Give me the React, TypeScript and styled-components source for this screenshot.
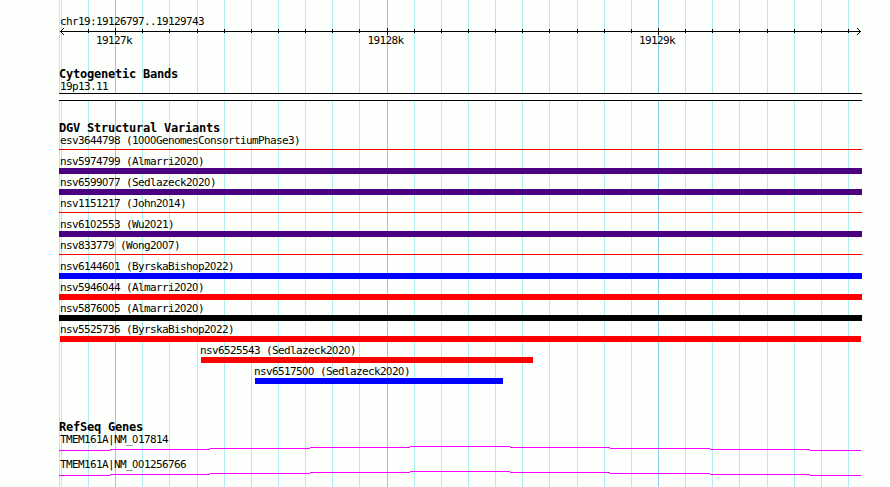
import React from "react";
import styled, { createGlobalStyle } from "styled-components";

const GlobalStyle = createGlobalStyle`
  body {
    margin: 0;
    background-color: #fdfffc;
  }
`;

const Browser = styled.main`
  position: relative;
  box-sizing: border-box;
  width: 890px;
  height: 487px;
  padding: 15px 28px 0 59px;
  overflow: hidden;
  color: black;
  font-family: "DejaVu Sans Mono", "Liberation Mono", monospace;
  font-size: 11px;
  line-height: 13px;
  letter-spacing: -0.62px;
  white-space: pre;
`;

const Grid = styled.svg`
  position: absolute;
  top: 0;
  left: 0;
`;

const Content = styled.div`
  position: relative;
  display: flex;
  flex-direction: column;
`;

const Text = styled.div`
  height: 13px;
  padding-left: 1px;
`;

const Zero = styled.span`
  font-family: "DejaVu Sans Condensed", "DejaVu Sans", sans-serif;
  font-stretch: condensed;
  letter-spacing: -0.3px;
`;

const Ruler = styled.svg`
  display: block;
  height: 7px;
`;

const Scale = styled.div`
  display: flex;
  height: 13px;
  margin-top: -1px;
  padding-left: 36px;
  gap: 234.5px;
`;

const Track = styled.section<{ space: number }>`
  margin-top: ${({ space }) => space}px;
`;

const Title = styled.h2`
  height: 12px;
  margin: 0;
  font-size: 12px;
  font-weight: bold;
  line-height: 13px;
  letter-spacing: -0.22px;
`;

const Band = styled.div`
  box-sizing: border-box;
  width: 803px;
  height: 8px;
  border: solid black;
  border-width: 1px 0;
  background-color: white;
`;

const Row = styled.div<{ start: number }>`
  height: 21px;
  margin-left: ${({ start }) => start}px;
`;

type BarProps = {
  size: number;
  color: string;
  thin?: boolean;
  inset?: number;
};

const Bar = styled.div<BarProps>`
  width: ${({ size }) => size}px;
  height: ${({ thin }) => (thin ? 1 : 6)}px;
  margin-top: ${({ thin }) => (thin ? 2 : 0)}px;
  margin-left: ${({ inset = 0 }) => inset}px;
  background-color: ${({ color }) => color};
`;

const Gene = styled.div`
  height: 25px;
`;

const Intron = styled.svg`
  display: block;
`;

const majors = [115, 387, 658];
const minors = [
  88, 142, 169, 197, 224, 251, 278, 305, 332, 359, 414, 441, 468, 495, 522,
  549, 577, 604, 631, 685, 712, 739, 767, 794, 821, 848,
];

type Variant = {
  name: string;
  color: string;
  thin?: boolean;
  start?: number;
  inset?: number;
  size?: number;
};

const variants: Variant[] = [
  { name: "esv3644798 (1000GenomesConsortiumPhase3)", color: "red", thin: true },
  { name: "nsv5974799 (Almarri2020)", color: "indigo" },
  { name: "nsv6599077 (Sedlazeck2020)", color: "indigo" },
  { name: "nsv1151217 (John2014)", color: "red", thin: true },
  { name: "nsv6102553 (Wu2021)", color: "indigo" },
  { name: "nsv833779 (Wong2007)", color: "red", thin: true },
  { name: "nsv6144601 (ByrskaBishop2022)", color: "blue" },
  { name: "nsv5946044 (Almarri2020)", color: "red" },
  { name: "nsv5876005 (Almarri2020)", color: "black" },
  { name: "nsv5525736 (ByrskaBishop2022)", color: "red", inset: 1, size: 801 },
  { name: "nsv6525543 (Sedlazeck2020)", color: "red", start: 140, inset: 2, size: 332 },
  { name: "nsv6517500 (Sedlazeck2020)", color: "blue", start: 194, inset: 2, size: 248 },
];

const genes = ["TMEM161A|NM_017814", "TMEM161A|NM_001256766"];

// plain zeros, the monospace face puts a dot in them
const Label = ({ children }: { children: string }) => (
  <Text>
    {children
      .split(/(0+)/)
      .map((part, i) => (i % 2 ? <Zero key={i}>{part}</Zero> : part))}
  </Text>
);

const App = (): JSX.Element => (
  <>
    <GlobalStyle />
    <Browser>
      <Grid width="890" height="487" shapeRendering="crispEdges">
        {[59, 61, ...minors].map((x) => (
          <rect key={x} x={x} width="1" height="487" fill="paleturquoise" />
        ))}
        {majors.map((x) => (
          <rect key={x} x={x} width="1" height="487" fill="skyblue" />
        ))}
      </Grid>
      <Content>
        <Label>chr19:19126797..19129743</Label>
        <Ruler
          width="803"
          height="7"
          viewBox="59 28 803 7"
          shapeRendering="crispEdges"
        >
          <rect x="60" y="31" width="801" height="1" />
          {minors.map((x) => (
            <rect key={x} x={x} y="29" width="1" height="4" />
          ))}
          {majors.map((x) => (
            <rect key={x} x={x} y="28" width="1" height="7" />
          ))}
          {[1, 2, 3].map((d) => (
            <React.Fragment key={d}>
              <rect x={60 + d} y={31 - d} width="1" height="1" />
              <rect x={60 + d} y={31 + d} width="1" height="1" />
              <rect x={860 - d} y={31 - d} width="1" height="1" />
              <rect x={860 - d} y={31 + d} width="1" height="1" />
            </React.Fragment>
          ))}
        </Ruler>
        <Scale>
          <Label>19127k</Label>
          <Label>19128k</Label>
          <Label>19129k</Label>
        </Scale>
        <Track space={21}>
          <Title>Cytogenetic Bands</Title>
          <Label>19p13.11</Label>
          <Band />
        </Track>
        <Track space={21}>
          <Title>DGV Structural Variants</Title>
          {variants.map(({ name, start = 0, size = 803, ...bar }) => (
            <Row key={name} start={start}>
              <Label>{name}</Label>
              <Bar size={size} {...bar} />
            </Row>
          ))}
        </Track>
        <Track space={35}>
          <Title>RefSeq Genes</Title>
          {genes.map((name) => (
            <Gene key={name}>
              <Label>{name}</Label>
              <Intron width="803" height="5" viewBox="59 446 803 5" shapeRendering="crispEdges">
                <path
                  d="M59 450.5H110M110 449.5H210M210 448.5H310M310 447.5H410M410 446.5H510M510 447.5H610M610 448.5H710M710 449.5H810M810 450.5H861"
                  stroke="magenta"
                />
              </Intron>
            </Gene>
          ))}
        </Track>
      </Content>
    </Browser>
  </>
);

export default App;
